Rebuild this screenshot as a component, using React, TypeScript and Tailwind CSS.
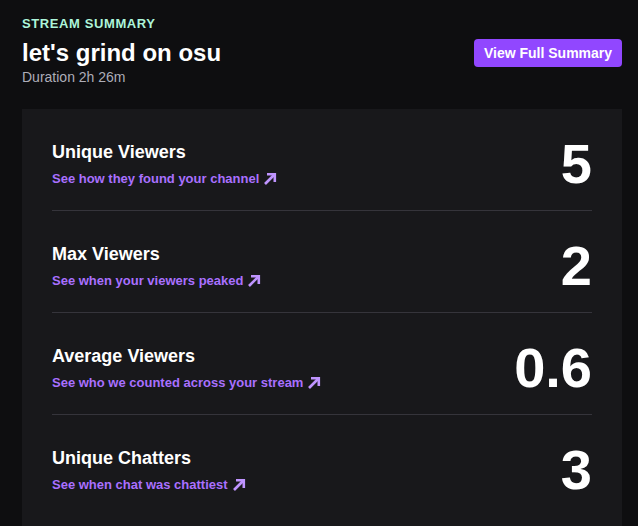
const stats = [
  { title: "Unique Viewers", link: "See how they found your channel", value: "5" },
  { title: "Max Viewers", link: "See when your viewers peaked", value: "2" },
  { title: "Average Viewers", link: "See who we counted across your stream", value: "0.6" },
  { title: "Unique Chatters", link: "See when chat was chattiest", value: "3" },
];

const ArrowIcon = () => (
  <svg width="14" height="14" viewBox="0 0 14 14" fill="none" className="ml-[4px] shrink-0">
    <path d="M2 12 L11.5 2.5" stroke="#bf94ff" strokeWidth="2.6" />
    <path d="M4 2.2 H11.8 V10" stroke="#bf94ff" strokeWidth="2.6" />
  </svg>
);

const App = () => {
  return (
    <div
      className="min-h-[526px] w-full bg-[#0e0e10] pl-[22px] pr-[16px] text-white"
      style={{ fontFamily: '"Liberation Sans", Arial, sans-serif' }}
    >
      <header className="flex items-start justify-between pt-[16px]">
        <div>
          <div className="text-[13px] leading-[16px] font-bold uppercase tracking-[0.6px] text-[#adf5da]">
            Stream Summary
          </div>
          <h1 className="mt-[7px] text-[24px] leading-[28px] font-bold">let's grind on osu</h1>
          <div className="mt-[1px] text-[14px] leading-[18px] text-[#adadb8]">Duration 2h 26m</div>
        </div>
        <button className="mt-[23px] h-[28px] w-[148px] rounded-[4px] bg-[#9147ff] text-[14px] font-bold text-white">
          View Full Summary
        </button>
      </header>

      <section className="mt-[23px] bg-[#18181b] px-[30px] pb-[20px]">
        {stats.map((s, i) => (
          <div
            key={s.title}
            className={
              "flex items-center justify-between pt-[32px] pb-[23px] " +
              (i < stats.length - 1 ? "border-b border-[#35343b]" : "")
            }
          >
            <div>
              <div className="text-[18px] leading-[22px] font-bold">{s.title}</div>
              <div className="mt-[8px] flex items-center text-[13px] leading-[16px] font-bold text-[#a970ff]">
                {s.link}
                <ArrowIcon />
              </div>
            </div>
            <div className="text-[56px] leading-[46px] font-bold">{s.value}</div>
          </div>
        ))}
      </section>
    </div>
  );
};

export default App;
